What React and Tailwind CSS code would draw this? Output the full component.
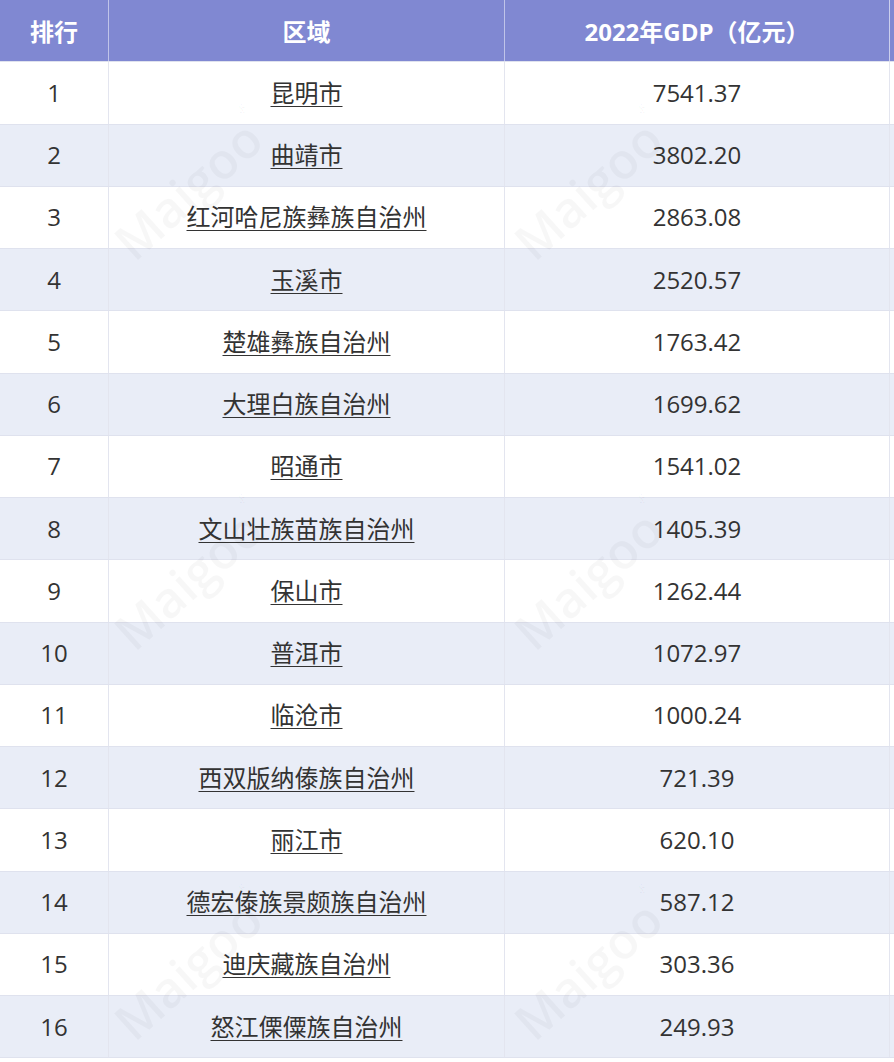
import React from "react";

const rows = [
  ["1", "昆明市", "7541.37"],
  ["2", "曲靖市", "3802.20"],
  ["3", "红河哈尼族彝族自治州", "2863.08"],
  ["4", "玉溪市", "2520.57"],
  ["5", "楚雄彝族自治州", "1763.42"],
  ["6", "大理白族自治州", "1699.62"],
  ["7", "昭通市", "1541.02"],
  ["8", "文山壮族苗族自治州", "1405.39"],
  ["9", "保山市", "1262.44"],
  ["10", "普洱市", "1072.97"],
  ["11", "临沧市", "1000.24"],
  ["12", "西双版纳傣族自治州", "721.39"],
  ["13", "丽江市", "620.10"],
  ["14", "德宏傣族景颇族自治州", "587.12"],
  ["15", "迪庆藏族自治州", "303.36"],
  ["16", "怒江傈僳族自治州", "249.93"],
];

const font = {
  fontFamily: '"Open Sans", "Noto Sans CJK SC", sans-serif',
};

const marks = [
  [122, 130], [522, 130],
  [122, 520], [522, 520],
  [122, 910], [522, 910],
];

function Watermark({ x, y }) {
  return (
    <div
      className="absolute pointer-events-none select-none text-[50px] font-semibold text-black/[0.03] origin-left -rotate-[42deg] whitespace-nowrap"
      style={{ left: x, top: y + 82 }}
    >
      Maigoo<span className="text-[16px] align-top">®</span>
    </div>
  );
}

export default function App() {
  return (
    <div className="relative w-[894px] h-[1062px] overflow-hidden bg-white" style={font}>
      <div className="w-[1000px]">
        <div className="grid grid-cols-[109px_396px_385px_110px] h-[62.25px] bg-[#8088d2] text-white font-bold text-[24px] border-b border-[#dfe2ee]">
          <div className="flex items-center justify-center pt-[2px] border-r border-white/50">排行</div>
          <div className="flex items-center justify-center pt-[2px] border-r border-white/50">区域</div>
          <div className="flex items-center justify-center pt-[2px] border-r border-white/60">2022年GDP（亿元）</div>
          <div></div>
        </div>
        {rows.map(([n, name, v], i) => (
          <div
            key={n}
            className={`grid grid-cols-[109px_396px_385px_110px] h-[62.25px] text-[24px] text-[#333333] border-b border-[#dfe2ee] ${
              i % 2 === 1 ? "bg-[#e9edf7]" : "bg-white"
            }`}
          >
            <div className="flex items-center justify-center border-r border-[#e3e5ef]">{n}</div>
            <div className="flex items-center justify-center border-r border-[#e3e5ef]">
              <span className="underline decoration-1 underline-offset-[4px]">{name}</span>
            </div>
            <div className="flex items-center justify-center border-r border-[#e3e5ef]">{v}</div>
            <div></div>
          </div>
        ))}
      </div>
      {marks.map(([x, y], i) => (
        <Watermark key={i} x={x} y={y} />
      ))}
    </div>
  );
}
